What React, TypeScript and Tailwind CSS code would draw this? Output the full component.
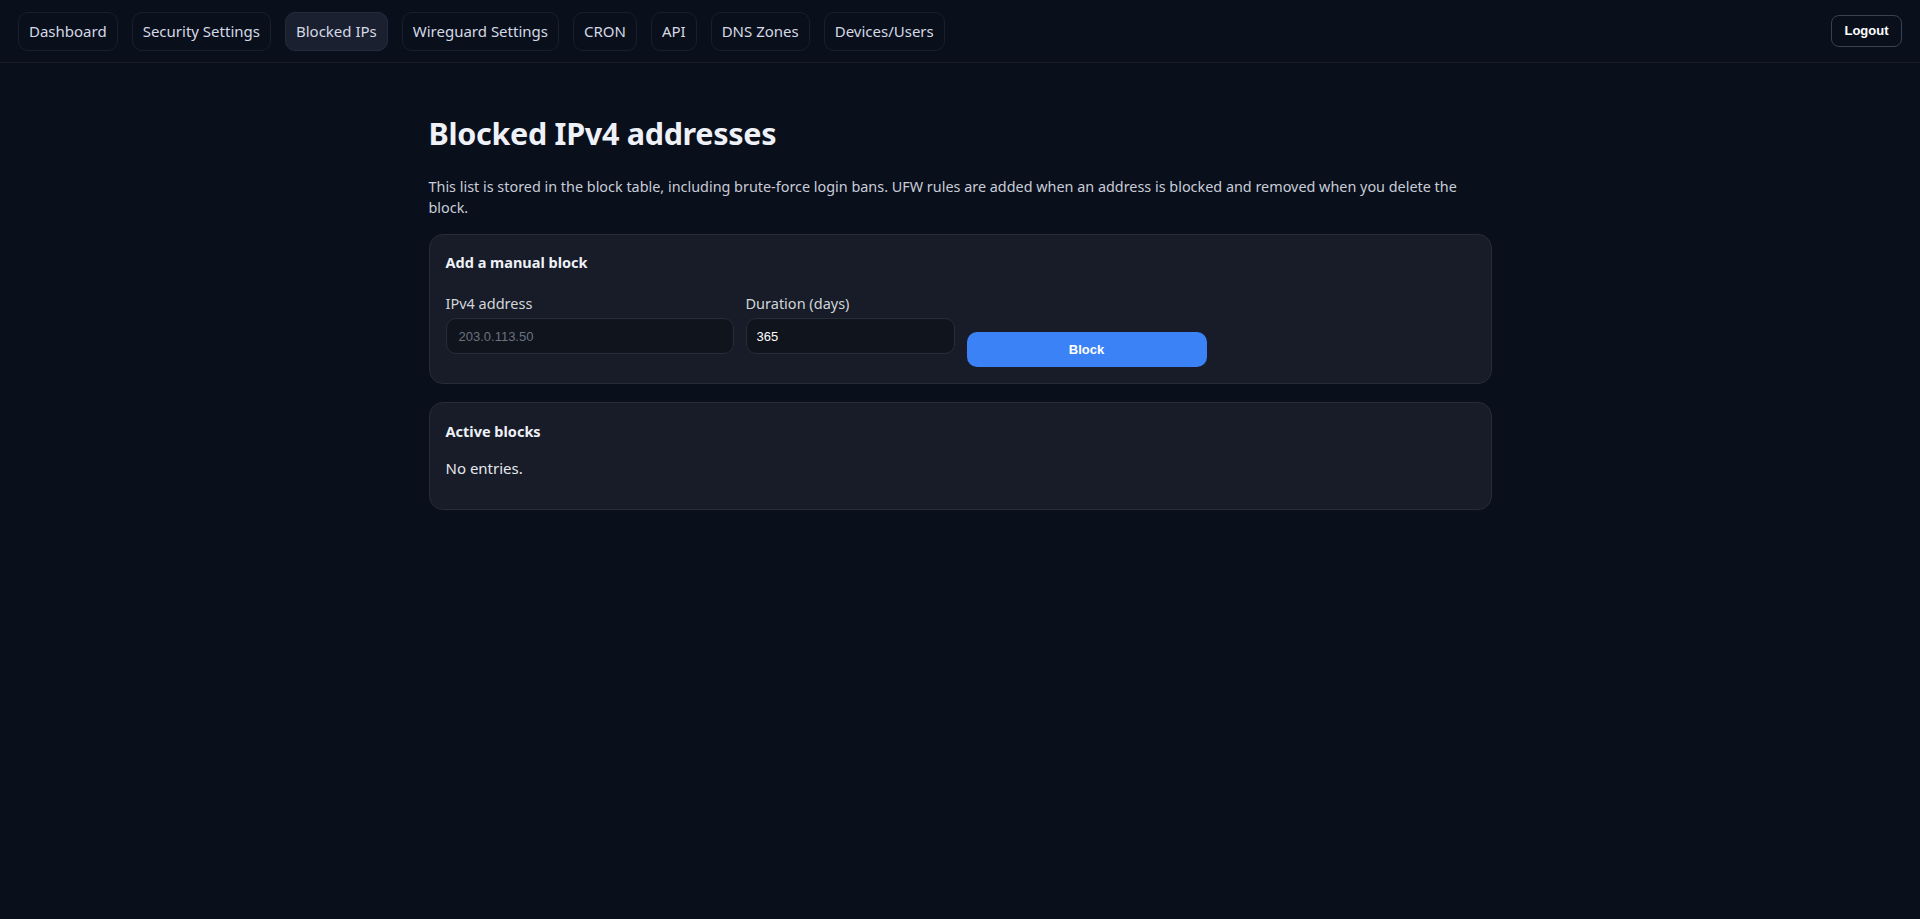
const tabs = [
	"Dashboard",
	"Security Settings",
	"Blocked IPs",
	"Wireguard Settings",
	"CRON",
	"API",
	"DNS Zones",
	"Devices/Users",
];

export default function App() {
	return (
		<div className="min-h-[919px] bg-[#0a0f1c] font-['Noto_Sans',sans-serif] text-[#e5e7eb]">
			<header className="flex items-center justify-between h-[63px] px-[18px] border-b border-[#161b27]">
				<nav className="flex gap-[14px]">
					{tabs.map((t) => (
						<a
							key={t}
							href="#"
							className={
								"h-[39px] px-[10px] flex items-center rounded-[10px] border text-[15px] text-[#d4d9e4] " +
								(t === "Blocked IPs"
									? "bg-[#1a2030] border-[#252b39]"
									: "border-[#1a1f2c]")
							}
						>
							{t}
						</a>
					))}
				</nav>
				<button className="h-[32px] w-[71px] rounded-[8px] border border-[#3a4150] font-['Liberation_Sans',Arial,sans-serif] text-[13px] font-bold text-white">
					Logout
				</button>
			</header>

			<main className="w-[1063px] mx-auto pt-[51px]">
				<h1 className="text-[30.5px] leading-[38px] font-bold text-[#eef1f7] tracking-[-0.3px]">
					Blocked IPv4 addresses
				</h1>
				<p className="mt-[24px] text-[14.4px] leading-[21px] text-[#c8cdd8] pr-[20px]">
					This list is stored in the block table, including brute-force login bans. UFW rules are
					added when an address is blocked and removed when you delete the block.
				</p>

				<section className="mt-[16px] rounded-[14px] border border-[#262c3a] bg-[#171c28] px-[16px] pt-[17px] pb-[16px]">
					<h2 className="text-[14.5px] leading-[20px] font-bold text-[#eef1f7]">
						Add a manual block
					</h2>
					<div className="mt-[21px] flex gap-[12px] items-start">
						<label className="flex flex-col w-[288px]">
							<span className="text-[14.5px] leading-[20px] text-[#d1d5db]">IPv4 address</span>
							<input
								placeholder="203.0.113.50"
								className="mt-[5px] h-[36px] rounded-[10px] border border-[#262c3a] bg-[#10141d] px-[12px] font-['Liberation_Sans',Arial,sans-serif] text-[13px] text-white placeholder:text-[#6b7280] outline-none"
							/>
						</label>
						<label className="flex flex-col w-[209px]">
							<span className="text-[14.5px] leading-[20px] text-[#d1d5db]">Duration (days)</span>
							<input
								defaultValue="365"
								className="mt-[5px] h-[36px] rounded-[10px] border border-[#262c3a] bg-[#10141d] px-[10px] font-['Liberation_Sans',Arial,sans-serif] text-[13px] text-white outline-none"
							/>
						</label>
						<button className="mt-[39px] w-[240px] h-[35px] rounded-[10px] bg-[#3b82f6] font-['Liberation_Sans',Arial,sans-serif] text-[13px] font-bold text-white">
							Block
						</button>
					</div>
				</section>

				<section className="mt-[18px] rounded-[14px] border border-[#262c3a] bg-[#171c28] px-[16px] pt-[18px] pb-[31px]">
					<h2 className="text-[14.5px] leading-[20px] font-bold text-[#eef1f7]">Active blocks</h2>
					<p className="mt-[17px] text-[15px] leading-[20px] text-[#e5e7eb]">No entries.</p>
				</section>
			</main>
		</div>
	);
}
